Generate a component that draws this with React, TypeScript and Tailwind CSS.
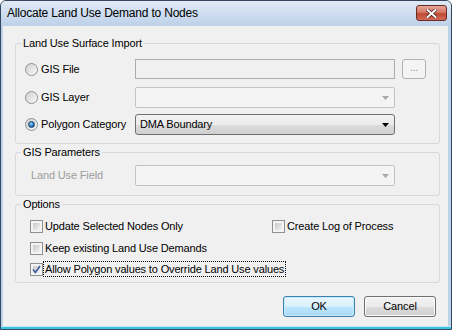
import React from 'react'

const ui = "font-['Liberation_Sans',Arial,sans-serif] text-[11px] leading-[13px] tracking-[-0.15px] text-black"

function Radio({ checked }: { checked?: boolean }) {
    return (
        <span className="flex items-center justify-center w-[13px] h-[13px] shrink-0 rounded-full border border-[#8f9194] bg-linear-to-br from-[#cfcfcf] to-[#fbfbfb]">
            {checked && (
                <span className="w-[7px] h-[7px] rounded-full border border-[#1b3f6e] bg-[radial-gradient(circle_at_40%_35%,#9fdcfb,#2a78c4_55%,#0d3d7c)]" />
            )}
        </span>
    )
}

function Check({ checked }: { checked?: boolean }) {
    return (
        <span className="relative flex w-[13px] h-[13px] shrink-0 border border-[#8e8f8f] bg-[#f4f4f4] p-[2px]">
            <span className="flex-1 bg-linear-to-br from-[#c9c9c9] to-[#f3f3f3]" />
            {checked && (
                <svg className="absolute inset-0" width="11" height="11" viewBox="0 0 11 11">
                    <path d="M2 5.5 L4.4 8.4 L9 2" fill="none" stroke="#3f5f9e" strokeWidth="1.7" />
                </svg>
            )}
        </span>
    )
}

function Arrow({ color }: { color: string }) {
    return (
        <svg width="7" height="4" viewBox="0 0 7 4" className="shrink-0">
            <polygon points="0,0 7,0 3.5,4" fill={color} />
        </svg>
    )
}

function Combo({ value, disabled }: { value?: string; disabled?: boolean }) {
    if (disabled) {
        return (
            <div className="w-[260px] h-[21px] flex items-center justify-end pr-[5px] rounded-[2px] border border-[#c3c3c3] bg-[#f4f4f4]">
                <Arrow color="#a8a8a8" />
            </div>
        )
    }
    return (
        <div className="w-[260px] h-[21px] flex items-center justify-between pl-[4px] pr-[5px] rounded-[3px] border border-[#707070] bg-[linear-gradient(#f2f2f2,#ebebeb_50%,#dddddd_50%,#cfcfcf)]">
            <span>{value}</span>
            <Arrow color="#000" />
        </div>
    )
}

function Group({ title, children, className = '' }: { title: string; children: React.ReactNode; className?: string }) {
    return (
        <fieldset className={`ml-[12px] w-[425px] rounded-[3px] border border-[#d5d9dc] ${className}`}>
            <legend className="ml-[5px] px-[2px]">{title}</legend>
            {children}
        </fieldset>
    )
}

export default function App() {
    return (
        <div className={`${ui} w-[452px] h-[330px] flex flex-col rounded-t-[6px] border border-[#32475c] bg-[#bcd2ea] overflow-hidden`}>
            {/* title bar */}
            <div className="h-[25px] flex items-start justify-between pl-[6px] pr-[4px] bg-linear-to-b from-[#e1eaf5] to-[#bcd1e9]">
                <span className="text-[12px] leading-[25px] tracking-[-0.2px]">Allocate Land Use Demand to Nodes</span>
                <div className="mt-[4px] w-[31px] h-[16px] flex items-center justify-center rounded-[3px] border border-[#6b2a27] bg-[linear-gradient(#e8a596,#d47866_45%,#c04a35_55%,#cf6a55)]">
                    <svg width="11" height="9" viewBox="0 0 11 9">
                        <path d="M1.5 1 L9.5 8 M9.5 1 L1.5 8" stroke="#4a1a16" strokeWidth="3.4" strokeLinecap="square" />
                        <path d="M1.5 1 L9.5 8 M9.5 1 L1.5 8" stroke="#ffffff" strokeWidth="2" strokeLinecap="square" />
                    </svg>
                </div>
            </div>

            <div className="flex-1 flex pl-[2px] pr-[3px]">
                <div className="flex-1 flex flex-col bg-[#f0f0f0]">
                    <Group title="Land Use Surface Import" className="mt-[11px]">
                        <div className="pt-[9px] pb-[8px] pl-[9px]">
                            <div className="h-[20px] flex items-center">
                                <div className="w-[110px] flex items-center gap-[3px]">
                                    <Radio />
                                    <span>GIS File</span>
                                </div>
                                <div className="w-[260px] h-[20px] border border-[#acacac] bg-[#f0f0f0]" />
                                <div className="ml-[7px] w-[24px] h-[20px] flex items-center justify-center rounded-[3px] border border-[#adb2b5] bg-[#f4f4f4] text-[#8a8a8a] text-[10px] leading-[10px] pb-[2px]">
                                    ...
                                </div>
                            </div>
                            <div className="mt-[8px] h-[21px] flex items-center">
                                <div className="w-[110px] flex items-center gap-[3px]">
                                    <Radio />
                                    <span>GIS Layer</span>
                                </div>
                                <Combo disabled />
                            </div>
                            <div className="mt-[6px] h-[21px] flex items-center">
                                <div className="w-[110px] flex items-center gap-[3px]">
                                    <Radio checked />
                                    <span>Polygon Category</span>
                                </div>
                                <Combo value="DMA Boundary" />
                            </div>
                        </div>
                    </Group>

                    <Group title="GIS Parameters" className="mt-[2px]">
                        <div className="pt-[6px] pb-[9px] pl-[9px]">
                            <div className="h-[21px] flex items-center">
                                <div className="w-[110px] pl-[6px] text-[#9d9d9d]">Land Use Field</div>
                                <Combo disabled />
                            </div>
                        </div>
                    </Group>

                    <Group title="Options" className="mt-[2px]">
                        <div className="pt-[7px] pb-[5px] pl-[14px]">
                            <div className="h-[16px] flex items-center">
                                <div className="w-[242px] flex items-center">
                                    <Check />
                                    <span className="border border-transparent pl-[1px] pr-[1px]">Update Selected Nodes Only</span>
                                </div>
                                <Check />
                                <span className="border border-transparent pl-[1px]">Create Log of Process</span>
                            </div>
                            <div className="mt-[6px] h-[16px] flex items-center">
                                <Check />
                                <span className="border border-transparent pl-[1px]">Keep existing Land Use Demands</span>
                            </div>
                            <div className="mt-[5px] h-[16px] flex items-center">
                                <Check checked />
                                <span className="h-[16px] flex items-center border border-dotted border-black pl-[1px] pr-[1px]">
                                    Allow Polygon values to Override Land Use values
                                </span>
                            </div>
                        </div>
                    </Group>

                    <div className="mt-[13px] flex justify-end gap-[9px] pr-[12px]">
                        <div className="w-[72px] h-[21px] flex items-center justify-center rounded-[3px] border border-[#3c7fb1] bg-[linear-gradient(#eaf6fd,#d9f0fc_50%,#bee6fd_50%,#a7d9f5)] shadow-[inset_0_0_0_1px_#c5ebfc]">
                            OK
                        </div>
                        <div className="w-[72px] h-[21px] flex items-center justify-center rounded-[3px] border border-[#707070] bg-[linear-gradient(#f2f2f2,#ebebeb_50%,#dddddd_50%,#cfcfcf)] shadow-[inset_0_0_0_1px_#fbfbfb]">
                            Cancel
                        </div>
                    </div>
                </div>
            </div>

            {/* bottom frame */}
            <div className="h-[3px] bg-[#3cc3e6] border-t border-[#bfe8f5]" />
        </div>
    )
}
